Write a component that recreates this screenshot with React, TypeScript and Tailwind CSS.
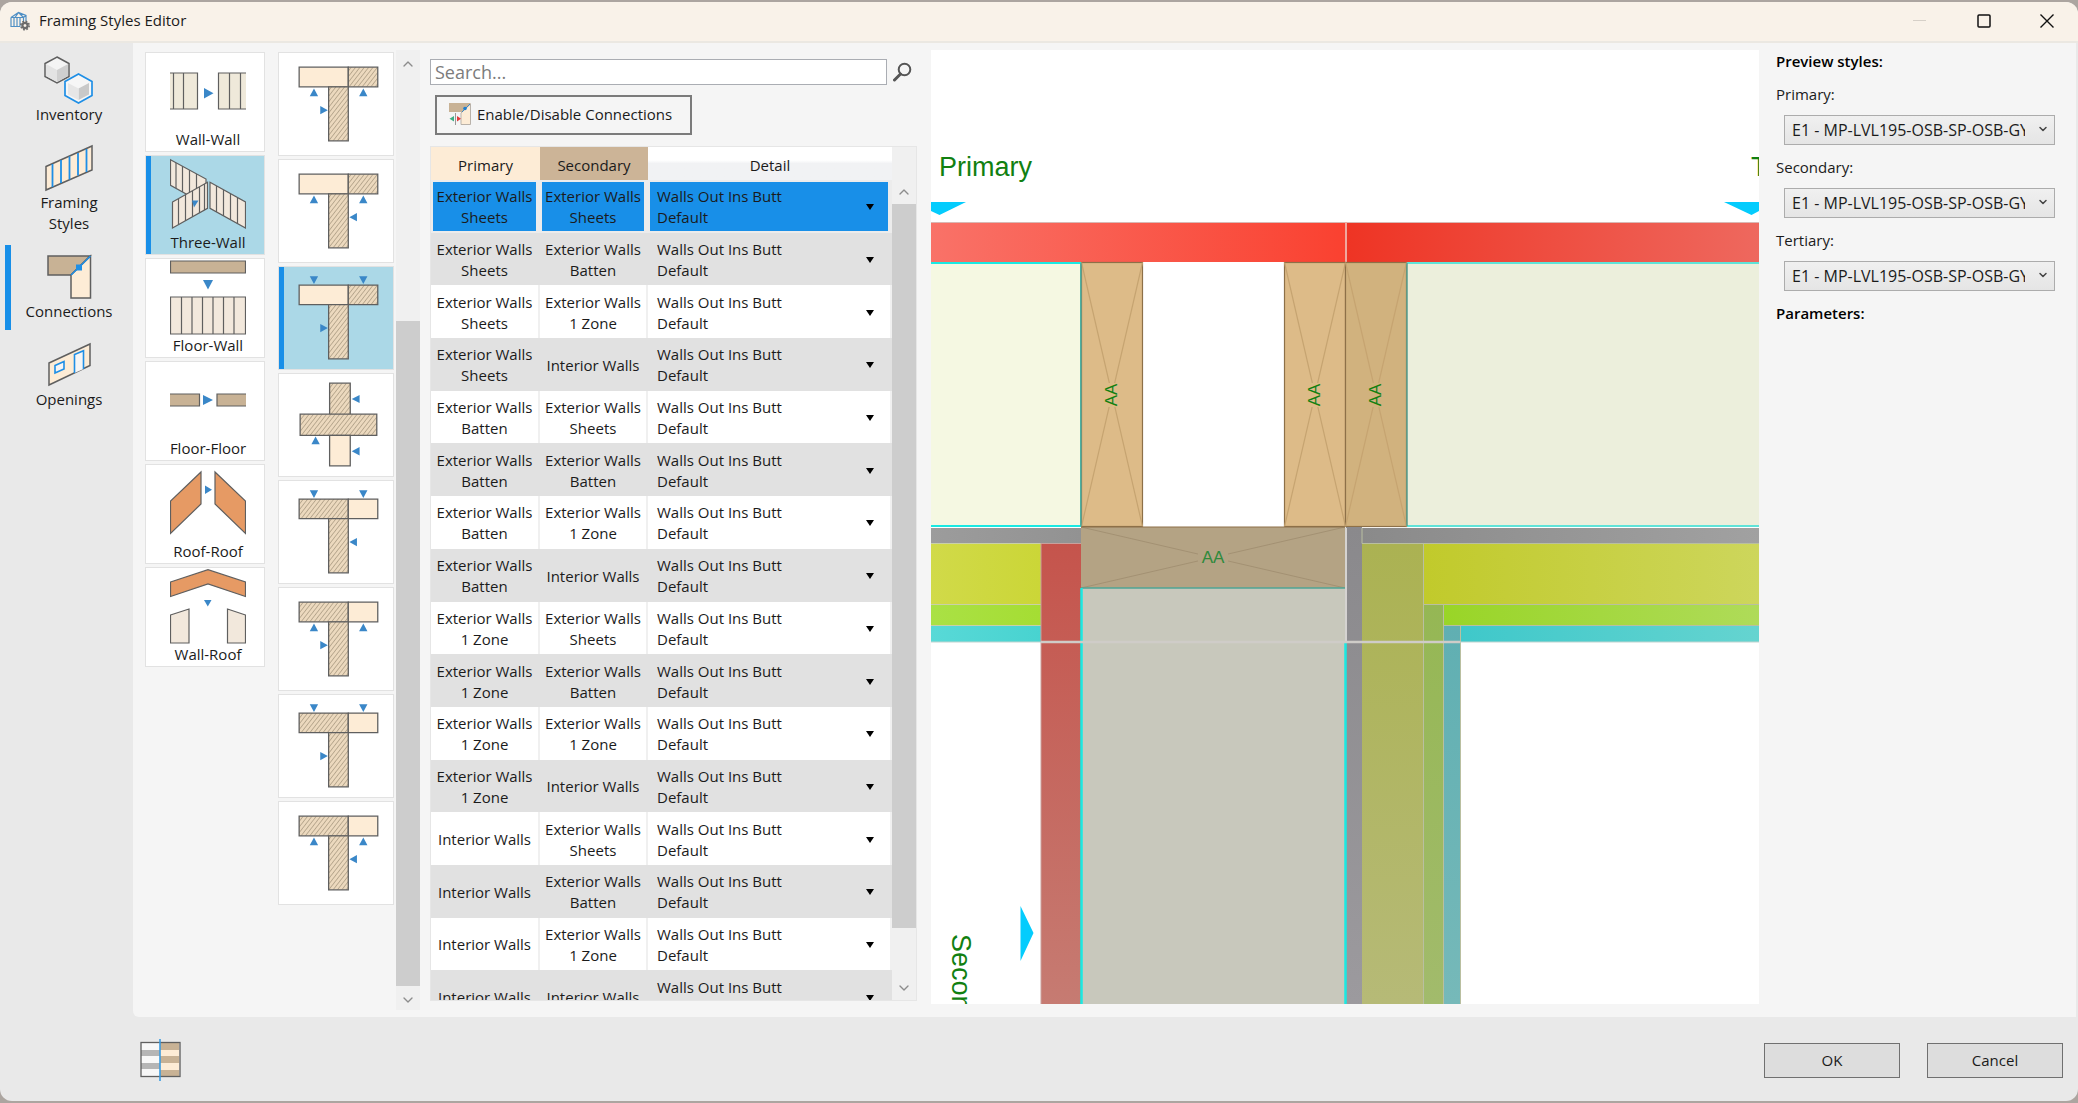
import { type ReactNode } from "react"
import { ChevronDown, ChevronUp } from "lucide-react"

const INK = "#5f5f5f"
const BLUE = "#3a87c8"
const CREAM = "#fdecd6"
const TAN = "#c8b295"
const PLANK = "#f2e8dc"
const ROOF = "#e69a64"

interface Item {
  label: string
  icon: ReactNode
  active?: boolean
}

interface Joint {
  id: string
  hatched: "left" | "right" | "cross"
  marks?: "up" | "down"
  side?: "left" | "right"
  active?: boolean
}

interface Row {
  primary: string
  secondary: string
}

/* ── Icons ── */

function AppIcon() {
  return (
    <svg className="size-5" viewBox="0 0 20 20" fill="none">
      <path d="M1 6.500L8.500 1.500 16 4.500V10M1 6.500V15.500h9M1 6.500h12.500l2.500-2M4 6.500v9M7 6.500v9M10 6.500v9M13.500 6.500V10M8.500 1.500L5 6.500M8.500 1.500l5 5" stroke="#4f8fc4" strokeWidth="1.200" />
      <circle cx="15" cy="14.500" r="2.600" stroke="#6b6b6b" strokeWidth="2.200" />
      <circle cx="15" cy="14.500" r="4.200" stroke="#6b6b6b" strokeWidth="1.600" strokeDasharray="1.800 1.500" />
    </svg>
  )
}

function InventoryIcon() {
  return (
    <svg className="h-12 w-[50px]" viewBox="0 0 50 48">
      <path d="M13 1l12 6.500v13L13 27 1 20.500v-13z" fill="#f4f4f4" stroke={INK} strokeWidth="1.500" />
      <path d="M13 14l11-6v12L13 26z" fill="#cfcfcf" />
      <path d="M13 14v12L2 20V8z" fill="#e3e3e3" />
      <path d="M34.500 18l13.500 7.500v14L34.500 47 21 39.500v-14z" fill="#f6f6f6" stroke="#1f8fe6" strokeWidth="1.700" />
      <path d="M34.500 32.500L45 27v11.500L34.500 44z" fill="#c9c9c9" />
      <path d="M34.500 32.500V44L24 38.500V27z" fill="#e6e6e6" />
    </svg>
  )
}

function FramingIcon() {
  return (
    <svg className="h-12 w-[50px]" viewBox="0 0 50 48">
      <path d="M2 22.500L48 2v24L2 46z" fill={CREAM} stroke={INK} strokeWidth="1.500" />
      <path d="M8.500 20v23M17 16v23M25.500 12.500v23M34 9v22.500M42.500 5v23" stroke="#1f8fe6" strokeWidth="1.800" />
    </svg>
  )
}

function ConnectionsIcon() {
  return (
    <svg className="h-12 w-[50px]" viewBox="0 0 50 48">
      <path d="M4 3h42L27 22H4z" fill={TAN} stroke={INK} strokeWidth="1.500" />
      <path d="M46.500 3v42H27V22z" fill={CREAM} stroke={INK} strokeWidth="1.500" />
      <path d="M27 22L46.500 3" stroke="#1f8fe6" strokeWidth="1.500" />
      <path d="M32 11.500h6v6h-6z" fill="#1f8fe6" />
    </svg>
  )
}

function OpeningsIcon() {
  return (
    <svg className="h-12 w-[50px]" viewBox="0 0 50 48">
      <path d="M5 22L46 3v21.500L5 44z" fill={CREAM} stroke={INK} strokeWidth="1.500" />
      <path d="M30.500 32V13.500l9-3.800V28" fill="#f5f5f5" stroke="#1f8fe6" strokeWidth="1.600" />
      <path d="M11 24.500l9-4v7.500l-9 4z" fill="#f5f5f5" stroke="#1f8fe6" strokeWidth="1.600" />
    </svg>
  )
}

function SearchIcon() {
  return (
    <svg className="h-5 w-[19px]" viewBox="0 0 19 20" fill="none" stroke="#555">
      <circle cx="11.500" cy="7.500" r="5.800" strokeWidth="2" />
      <path d="M7.500 12L1.500 18" strokeWidth="3" strokeLinecap="round" />
    </svg>
  )
}

function EnableIcon() {
  return (
    <svg className="size-[22px]" viewBox="0 0 22 22">
      <path d="M0 0h22l-9 9H0z" fill={TAN} />
      <path d="M21.500 1v20.500H12V10z" fill={CREAM} stroke="#b9b2aa" />
      <path d="M13 9L21 1" stroke={BLUE} />
      <circle cx="16" cy="5.500" r="1.800" fill="#1f7fd0" />
      <path d="M6.500 10v12" stroke="#999" />
      <path d="M5 13v5.500L.5 15.700z" fill="#3fae84" />
      <path d="M8 13v5.500l4-2.800z" fill="#e33b3b" />
    </svg>
  )
}

function SplitIcon() {
  return (
    <svg className="h-[42px] w-[41px]" viewBox="0 0 41 42">
      <path d="M1 4h19v34H1z" fill="#f7f7f7" />
      <path d="M1 11h19v6H1zM1 24h19v6H1z" fill="#b5b5b5" />
      <path d="M20 4h19v34H20z" fill={TAN} />
      <path d="M20 11h19v6H20zM20 24h19v7H20z" fill={CREAM} />
      <rect x="1" y="3.500" width="39" height="34" fill="none" stroke={INK} strokeWidth="1.300" />
      <path d="M20 0v42" stroke="#3a9be0" strokeWidth="1.600" />
    </svg>
  )
}

/* ── Connection category drawings ── */

function Art({ children }: { children: ReactNode }) {
  return (
    <svg className="h-[75px] w-[76px]" viewBox="0 0 76 75" stroke={INK} strokeWidth="1.200">
      {children}
    </svg>
  )
}

const categories: Item[] = [
  {
    label: "Wall-Wall",
    icon: (
      <Art>
        <path d="M0 19h27.500v36H0zM48.500 19H76v36H48.500z" fill="#efe9da" stroke="none" />
        <path d="M0 19h27.500v36H0M3.500 19v36M13.500 19v36M76 19H48.500v36H76M59.500 19v36M70.500 19v36" fill="none" />
        <path d="M34 34l9.500 5.300-9.500 5.300z" fill={BLUE} stroke="none" />
      </Art>
    ),
  },
  {
    label: "Three-Wall",
    active: true,
    icon: (
      <Art>
        <path d="M.5 2.700L36 22v26L.5 28.300z" fill={PLANK} />
        <path d="M6 6v25M12.500 9v26M19.500 13v24M26.500 17v15" fill="none" />
        <path d="M2.500 45l35-19.700v26L2.500 71z" fill={PLANK} />
        <path d="M8.500 42v25.500M15.500 38v26M22.500 34v26M29.500 30v26M34.500 27v26" fill="none" />
        <path d="M40 25.300L75.500 45v26L40 51.300z" fill={PLANK} />
        <path d="M46.500 29v26M53.500 33v26M60.500 37v26M67.500 41v26" fill="none" />
        <path d="M22 43.500h6.500l-4.500 7z" fill={BLUE} stroke="none" />
      </Art>
    ),
  },
  {
    label: "Floor-Wall",
    icon: (
      <Art>
        <path d="M.5 1h75v12H.5z" fill={TAN} />
        <path d="M33 20h10l-5 9.500z" fill={BLUE} stroke="none" />
        <path d="M.5 37h75v37H.5z" fill={PLANK} />
        <path d="M11.500 37v37M22 37v37M32.500 37v37M43 37v37M53.500 37v37M64 37v37" fill="none" />
      </Art>
    ),
  },
  {
    label: "Floor-Floor",
    icon: (
      <Art>
        <path d="M0 31h29.500v12H0zM76 31H47v12h29z" fill={TAN} stroke="none" />
        <path d="M0 31h29.500v12H0M76 31H47v12h29" fill="none" />
        <path d="M33 32l10 5-10 5z" fill={BLUE} stroke="none" />
      </Art>
    ),
  },
  {
    label: "Roof-Roof",
    icon: (
      <Art>
        <path d="M31 6v32L.5 67.500V35zM45 6l30.500 29v32.500L45 38z" fill={ROOF} />
        <path d="M35 19.500l7 4.300-7 4.300z" fill={BLUE} stroke="none" />
      </Art>
    ),
  },
  {
    label: "Wall-Roof",
    icon: (
      <Art>
        <path d="M.5 13L38 .7 75.500 13v14.500L38 15 .5 27.500z" fill={ROOF} />
        <path d="M34 31h7.500l-3.700 6.500z" fill={BLUE} stroke="none" />
        <path d="M.5 46L19 40v34H.5zM75.500 46l-18-6v34h18z" fill={PLANK} />
      </Art>
    ),
  },
]

const sections: Item[] = [
  { label: "Inventory", icon: <InventoryIcon /> },
  { label: "Framing Styles", icon: <FramingIcon /> },
  { label: "Connections", icon: <ConnectionsIcon />, active: true },
  { label: "Openings", icon: <OpeningsIcon /> },
]

const joints: Joint[] = [
  { id: "Right hatched, marks up, side right", hatched: "right", marks: "up", side: "right" },
  { id: "Right hatched, marks up, side left", hatched: "right", marks: "up", side: "left" },
  { id: "Right hatched, marks down, side right", hatched: "right", marks: "down", side: "right", active: true },
  { id: "Cross", hatched: "cross" },
  { id: "Left hatched, marks down, side left", hatched: "left", marks: "down", side: "left" },
  { id: "Left hatched, marks up, side right", hatched: "left", marks: "up", side: "right" },
  { id: "Left hatched, marks down, side right", hatched: "left", marks: "down", side: "right" },
  { id: "Left hatched, marks up, side left", hatched: "left", marks: "up", side: "left" },
]

const kinds = ["Exterior Walls Sheets", "Exterior Walls Batten", "Exterior Walls 1 Zone", "Interior Walls"]

const rows: Row[] = kinds.flatMap((primary) =>
  kinds.map((secondary) => ({ primary, secondary }))
)

const previews = ["Primary", "Secondary", "Tertiary"]

function JointArt({ hatched, marks, side }: Joint) {
  if (hatched === "cross") {
    return (
      <svg className="h-[104px] w-[116px]" viewBox="0 0 116 104" stroke={INK} strokeWidth="1.300">
        <path d="M51.500 9.500h21V41h-21zM21.500 41h78v21.500h-78z" fill="url(#hatch)" />
        <path d="M51.500 62.500h21v31h-21z" fill={CREAM} />
        <path d="M82 21.500v8L74 25.500zM82 74.500v8.500l-8-4.300zM33 71.500h8.500L37.200 63.700z" fill={BLUE} stroke="none" />
      </svg>
    )
  }
  const dy = marks === "down" ? 4 : 0
  return (
    <svg className="h-[104px] w-[116px]" viewBox="0 0 116 104" stroke={INK} strokeWidth="1.300">
      <g transform={`translate(0 ${dy})`}>
        <path d="M20.500 14.500h50v20h-50z" fill={hatched === "left" ? "url(#hatch)" : CREAM} />
        <path d="M70.500 14.500h30v20h-30z" fill={hatched === "right" ? "url(#hatch)" : CREAM} />
        <path d="M50.500 34.500h20v55h-20z" fill="url(#hatch)" />
        <g fill={BLUE} stroke="none">
          {marks === "up" ? (
            <path d="M31.300 44h8.500l-4.200-7.800zM81.500 44H90l-4.200-7.800z" />
          ) : (
            <path d="M31.300 5.500h8.500l-4.200 7.800zM81.500 5.500H90l-4.200 7.800z" />
          )}
          {side === "right" ? <path d="M42 54v8.500l7.700-4.200z" /> : <path d="M79.300 54v8.500l-7.700-4.200z" />}
        </g>
      </g>
    </svg>
  )
}

function Stud({ x, fill }: { x: number; fill: string }) {
  return (
    <g>
      <rect x={x} y="212.500" width="61" height="264" fill={fill} stroke="#8d7048" strokeWidth="1.200" />
      <path d={`M${x} 212.500l61 264M${x + 61} 212.500l-61 264`} stroke="#c6a471" strokeWidth="1.200" />
      <rect x={x + 20} y="333" width="20" height="24" fill={fill} />
      <text x={x + 29} y="345" transform={`rotate(-90 ${x + 29} 345)`} dy="6" textAnchor="middle" fontSize="17" fill="#118011">
        AA
      </text>
    </g>
  )
}

function Fade({ id, from, to, down }: { id: string; from: string; to: string; down?: boolean }) {
  return (
    <linearGradient id={id} x1="0" y1="0" x2={down ? "0" : "1"} y2={down ? "1" : "0"}>
      <stop offset="0" stopColor={from} />
      <stop offset="1" stopColor={to} />
    </linearGradient>
  )
}

function PreviewDrawing() {
  return (
    <svg className="h-full w-full font-['Liberation_Sans',Arial,sans-serif]" viewBox="0 0 828 954" preserveAspectRatio="xMinYMin slice">
      <defs>
        <Fade id="redL" from="#f97268" to="#fa4130" />
        <Fade id="redR" from="#ee3424" to="#ee685e" />
        <Fade id="redV" from="#c5544c" to="#c67b72" down />
        <Fade id="grayV" from="#8a898c" to="#9c9a9e" down />
        <Fade id="grayL" from="#9c9c9c" to="#929292" />
        <Fade id="grayR" from="#8a8a8a" to="#a1a1a1" />
        <Fade id="yellowL" from="#d1da49" to="#cbd637" />
        <Fade id="yellowR" from="#c1ca2b" to="#cdd65c" />
        <Fade id="yellowV" from="#abb252" to="#b6ba77" down />
        <Fade id="greenL" from="#aae145" to="#a5dd33" />
        <Fade id="greenR" from="#99d527" to="#afdb59" />
        <Fade id="greenV" from="#95b754" to="#a2bb6c" down />
        <Fade id="cyanL" from="#58d9d7" to="#48d3d0" />
        <Fade id="cyanR" from="#3fc8ca" to="#65d4d0" />
        <Fade id="cyanV" from="#60afb2" to="#76b9b9" down />
      </defs>

      {/* Facing layer */}
      <rect y="172" width="415" height="40" fill="url(#redL)" />
      <rect x="415" y="172" width="413" height="40" fill="url(#redR)" />
      <path d="M0 172.500h828" stroke="#d9b8b4" />
      <path d="M415 172v40" stroke="#f0a79e" strokeWidth="2" />

      {/* Insulation and studs */}
      <rect x="-2" y="213" width="152" height="263" fill="#f5f8e2" stroke="#1ae9e2" strokeWidth="2" />
      <rect x="475" y="213" width="360" height="263" fill="#ecefdc" stroke="#5fe3d8" strokeWidth="2" />
      <Stud x={150.5} fill="#ddbb88" />
      <Stud x={353.5} fill="#ddbb88" />
      <Stud x={414.5} fill="#d1b27e" />
      <path d="M150 213v263M476 213v263" stroke="#5aa393" strokeWidth="1.500" />

      {/* Inner layers, left */}
      <rect y="478" width="150" height="15" fill="url(#grayL)" />
      <rect y="493" width="110" height="61" fill="url(#yellowL)" />
      <rect y="554" width="110" height="21" fill="url(#greenL)" />
      <rect y="575" width="110" height="17" fill="url(#cyanL)" />
      <path d="M0 493.500h110M0 554.500h110M0 575.500h110" stroke="#c9d0a8" />
      <rect x="110" y="493" width="40" height="461" fill="url(#redV)" />
      <path d="M110 493.500h40M110 493v461" stroke="#c9a09c" />

      {/* Lintel and secondary wall core */}
      <rect x="150" y="477" width="264" height="61" fill="#b4a384" />
      <path d="M150 477l264 61M414 477l-264 61" stroke="#a39173" />
      <rect x="267" y="492" width="30" height="30" fill="#b4a384" />
      <text x="282" y="513" textAnchor="middle" fontSize="17" fill="#2f8a3c">AA</text>
      <rect x="150" y="538" width="265" height="416" fill="#c8c8bc" />
      <path d="M150 477h264" stroke="#8d7048" strokeWidth="1.200" />
      <path d="M150 538h264" stroke="#4fa595" strokeWidth="1.500" />

      {/* Inner layers, right */}
      <rect x="415" y="477" width="16" height="477" fill="url(#grayV)" />
      <rect x="431" y="478" width="397" height="15" fill="url(#grayR)" />
      <rect x="431" y="493" width="61" height="461" fill="url(#yellowV)" />
      <rect x="492" y="554" width="20" height="400" fill="url(#greenV)" />
      <rect x="512" y="575" width="17" height="379" fill="url(#cyanV)" />
      <rect x="492" y="493" width="336" height="61" fill="url(#yellowR)" />
      <rect x="512" y="554" width="316" height="21" fill="url(#greenR)" />
      <rect x="529" y="575" width="299" height="17" fill="url(#cyanR)" />
      <path d="M431 478v15.500h397M492.500 493v61.500h336M512.500 554v21.500h316M529.500 575v379M512.500 575v379M492.500 554v400" fill="none" stroke="#b9bfa0" />
      <path d="M415 478v114" stroke="#d5d3d1" strokeWidth="2" />
      <path d="M414.500 592v362M150.500 538v416" stroke="#1ae9e2" strokeWidth="2.500" />
      <path d="M0 592h828" stroke="#c2d4d0" />
      <path d="M110 592h419" stroke="#cfccc8" strokeWidth="2.500" />

      {/* Direction markers */}
      <path d="M0 152h35L8.500 165 0 161zM793 152h35v9l-7.500 4zM89.500 856v55L102.500 883z" fill="#04ccfd" />
      <g fill="#118011" fontSize="27">
        <text x="8" y="126">Primary</text>
        <text x="820" y="126">T</text>
        <text transform="translate(21 884) rotate(90)">Secondary</text>
      </g>
    </svg>
  )
}

export default function App() {
  return (
    <div className="h-screen bg-[#aca5a0] py-[2px] font-['Open_Sans','Noto_Sans',sans-serif] text-[15px] leading-[21px] text-[#1b1b1b]">
      <div className="flex h-full flex-col overflow-hidden rounded-xl bg-[#e9e9e9]">
        {/* ── Title bar ── */}
        <header className="flex h-[41px] shrink-0 items-center border-b-2 border-[#ebe8e2] bg-[#f9f2e9] pb-0.5 pl-2.5">
          <AppIcon />
          <h1 className="ml-[9px] flex-1">Framing Styles Editor</h1>
          <button aria-label="Minimize" className="flex h-full w-16 items-center justify-center">
            <svg className="size-[14px]" viewBox="0 0 14 14"><path d="M0 6.500h13" stroke="#d6d0c8" /></svg>
          </button>
          <button aria-label="Maximize" className="flex h-full w-16 items-center justify-center">
            <svg className="size-[14px]" viewBox="0 0 14 14"><rect x="1" y="1" width="12" height="12" rx="1" fill="none" stroke="#111" strokeWidth="1.500" /></svg>
          </button>
          <button aria-label="Close" className="flex h-full w-[62px] items-center justify-center">
            <svg className="size-[14px]" viewBox="0 0 14 14"><path d="M.5.5l13 13M13.500.5l-13 13" stroke="#111" strokeWidth="1.400" /></svg>
          </button>
        </header>

        <div className="flex min-h-0 flex-1">
          {/* ── Sections ── */}
          <nav className="flex w-[133px] shrink-0 flex-col gap-[3px] pt-[5px]">
            {sections.map(({ label, icon, active }) => (
              <button
                key={label}
                className={`ml-[5px] flex flex-col items-center border-l-[6px] pt-2 pr-[26px] pb-2 pl-5 ${
                  active ? "border-[#188fe8]" : "border-transparent"
                }`}
              >
                {icon}
                <span>{label}</span>
              </button>
            ))}
          </nav>

          <main className="mr-[2px] flex min-w-0 flex-1 rounded-bl-md bg-[#f5f5f5] pl-3">
            {/* ── Categories ── */}
            <div className="flex w-[120px] shrink-0 flex-col gap-[3px] pt-[9px]">
              {categories.map(({ label, icon, active }) => (
                <button
                  key={label}
                  className={`relative flex h-[100px] flex-col items-center border border-[#e2e2e2] pt-px pl-1.5 ${
                    active ? "bg-[#abd8e7]" : "bg-white"
                  }`}
                >
                  {active && <span className="absolute inset-y-0 left-0 w-[5px] bg-[#188fe8]" />}
                  {icon}
                  <span>{label}</span>
                </button>
              ))}
            </div>

            {/* ── Joint variants ── */}
            <div className="ml-[13px] flex w-[116px] shrink-0 flex-col gap-[3px] pt-[9px]">
              <svg className="absolute size-0" aria-hidden="true">
                <defs>
                  <pattern id="hatch" width="3.500" height="3.500" patternUnits="userSpaceOnUse" patternTransform="rotate(38)">
                    <rect width="3.500" height="3.500" fill="#ecd9be" />
                    <path d="M0 0v3.500" stroke="#b3a38a" strokeWidth="1.700" />
                  </pattern>
                </defs>
              </svg>
              {joints.map((joint) => (
                <button
                  key={joint.id}
                  aria-label={joint.id}
                  className={`relative flex h-[104px] items-center justify-center border border-[#e2e2e2] ${
                    joint.active ? "bg-[#abd8e7]" : "bg-white"
                  }`}
                >
                  {joint.active && <span className="absolute inset-y-0 left-0 w-[5px] bg-[#188fe8]" />}
                  <JointArt {...joint} />
                </button>
              ))}
            </div>
            <div className="mt-[7px] mb-[7px] ml-[2px] flex w-6 shrink-0 flex-col items-center bg-[#f0f0f0] text-[#8c8c8c]">
              <ChevronUp className="mt-1.5 mb-1 size-4" />
              <div className="flex-[245]" />
              <div className="w-full flex-[664] bg-[#cdcdcd]" />
              <ChevronDown className="mt-1.5 mb-0.5 size-4" />
            </div>

            {/* ── Connection table ── */}
            <section className="ml-2.5 flex w-[487px] shrink-0 flex-col pt-4 pb-4">
              <div className="flex items-center gap-1.5">
                <input
                  type="text"
                  aria-label="Search"
                  placeholder="Search..."
                  className="h-[26px] min-w-0 flex-1 border border-[#aaadb3] bg-white px-1 text-lg leading-6 placeholder:text-[#7c7c7c]"
                />
                <button aria-label="Run search" className="w-6">
                  <SearchIcon />
                </button>
              </div>
              <button className="mt-2.5 ml-[5px] flex h-10 w-[257px] items-center gap-1.5 border-2 border-[#7b7b7b] pb-0.5 pl-3">
                <EnableIcon />
                Enable/Disable Connections
              </button>

              <div className="mt-[11px] flex min-h-0 flex-1 border border-[#e6e6e6]">
                <div className="min-w-0 flex-1 overflow-hidden">
                  <table className="h-[876px] w-full table-fixed border-separate border-spacing-0">
                    <thead>
                      <tr className="h-[33px]">
                        <th className="w-[109px] bg-[#fdecd6] pt-1 font-normal">Primary</th>
                        <th className="w-[108px] bg-[#ccb497] pt-1 font-normal">Secondary</th>
                        <th className="bg-linear-to-b from-white from-40% to-[#f1f2f4] to-50% pt-1 font-normal">Detail</th>
                      </tr>
                    </thead>
                    <tbody>
                      {rows.map(({ primary, secondary }, index) => {
                        const cell =
                          index === 0
                            ? "border-r-2 border-[#ececec] bg-[#188fe8] shadow-[inset_0_0_0_2px_#ececec]"
                            : index % 2 === 1
                              ? "border-r-2 border-[#e1e1e1] bg-[#e1e1e1]"
                              : "border-r-2 border-[#f0f0f0] bg-white"
                        return (
                          <tr key={`${primary}/${secondary}`}>
                            <td className={`${cell} px-px pt-0.5 text-center`}>{primary}</td>
                            <td className={`${cell} px-px pt-0.5 text-center`}>{secondary}</td>
                            <td className={`${cell} pt-0.5 pr-4 pl-[9px]`}>
                              <div className="flex items-center justify-between">
                                <span className="w-36">Walls Out Ins Butt Default</span>
                                <button aria-label="Choose detail">
                                  <svg className="h-[6px] w-2" viewBox="0 0 8 6"><path d="M0 0h8L4 6z" fill="#000" /></svg>
                                </button>
                              </div>
                            </td>
                          </tr>
                        )
                      })}
                    </tbody>
                  </table>
                </div>
                <div className="flex w-6 shrink-0 flex-col items-center bg-[#f0f0f0] pt-[37px] text-[#8c8c8c]">
                  <ChevronUp className="mb-1 size-4" />
                  <div className="w-full flex-[723] bg-[#cdcdcd]" />
                  <div className="flex-[52]" />
                  <ChevronDown className="mb-1 size-4" />
                </div>
              </div>
            </section>

            {/* ── Preview ── */}
            <div className="mt-[7px] mb-[13px] ml-3.5 min-w-0 flex-1 overflow-hidden bg-white">
              <PreviewDrawing />
            </div>

            <aside className="w-[317px] shrink-0 pt-2 pr-[21px] pl-[17px]">
              <h2 className="font-semibold text-black">Preview styles:</h2>
              {previews.map((name) => (
                <div key={name} className="mt-3">
                  <label htmlFor={name}>{name}:</label>
                  <div className="relative mt-2.5 ml-2">
                    <select
                      id={name}
                      className="block h-[30px] w-full appearance-none border border-[#acacac] bg-linear-to-b from-[#f0f0f0] to-[#e5e5e5] pr-[29px] pl-[7px] text-base"
                    >
                      <option>E1 - MP-LVL195-OSB-SP-OSB-GYP</option>
                    </select>
                    <ChevronDown className="pointer-events-none absolute top-2 right-1.5 size-3 text-[#444]" strokeWidth={3} />
                  </div>
                </div>
              ))}
              <h2 className="mt-3 font-semibold text-black">Parameters:</h2>
            </aside>
          </main>
        </div>

        {/* ── Footer ── */}
        <footer className="flex h-[84px] shrink-0 items-center gap-[27px] pt-0.5 pr-[15px] pl-[140px]">
          <button aria-label="Split view" className="mr-auto">
            <SplitIcon />
          </button>
          <button className="h-[35px] w-[136px] border border-[#707070] bg-[#dddddd]">OK</button>
          <button className="h-[35px] w-[136px] border border-[#707070] bg-[#dddddd]">Cancel</button>
        </footer>
      </div>
    </div>
  )
}
